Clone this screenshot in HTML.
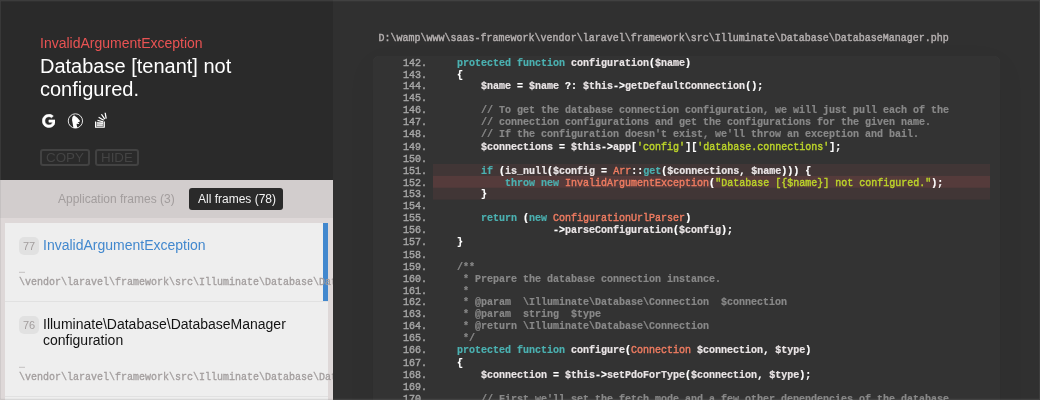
<!DOCTYPE html>
<html lang="en">
<head>
<meta charset="utf-8">
<title>Whoops! There was an error.</title>
<style>
html,body{margin:0;padding:0;}
body{width:1040px;height:400px;overflow:hidden;position:relative;background:#303030;font:12px "Liberation Sans",sans-serif;color:#131313;}
.mono{font-family:"Liberation Mono",monospace;}
#left{will-change:transform;position:absolute;left:0;top:0;width:333px;height:400px;background:#ded8d8;overflow:hidden;}
header{position:absolute;left:0;top:0;width:333px;height:180px;box-sizing:border-box;background:#2a2a2a;color:#fff;padding:35px 40px;overflow:hidden;}
.exc-title{margin:0;font-weight:normal;font-size:14px;line-height:16px;color:#e95353;}
.exc-message{margin:4px 0 0 0;font-size:20px;line-height:23px;color:#fff;}
.icons{position:absolute;left:0;top:0;}
.icons svg{position:absolute;display:block;}
.btn{position:absolute;top:149px;height:17px;box-sizing:border-box;font:13.3333px "Liberation Sans",sans-serif;line-height:15px;padding:1px 6px;color:#444;box-shadow:inset 0 0 0 2px #424242;border-radius:3px;}
.fdesc{position:absolute;left:0;top:180px;width:333px;height:38px;box-sizing:border-box;background:rgba(0,0,0,.05);padding:8px 15px;text-align:center;font-size:12px;line-height:14px;color:#a29d9d;}
.tab{display:inline-block;padding:4px 8px;margin:0 2px;border-radius:3px;color:#a29d9d;}
.tab.on{background:#2a2a2a;color:#f2f2f2;padding:4px 7px 4px 9px;margin-left:1px;}
.el{-webkit-text-stroke:0;}
#edge{position:absolute;left:0;top:0;width:1040px;height:400px;box-sizing:border-box;box-shadow:inset 0 0 0 1px rgba(128,128,128,.16),inset 0 2px 0 0 rgba(128,128,128,.07),inset 0 -2px 0 0 rgba(128,128,128,.05);pointer-events:none;z-index:9;}
.frames{position:absolute;left:5px;top:223px;width:323px;}
.frame{padding:14px;background:#eee;border-bottom:1px solid rgba(0,0,0,.05);position:relative;}
.frame.active{box-shadow:inset -5px 0 0 0 #4288ce;color:#4288ce;}
.fidx{float:left;font-size:11px;color:#a29d9d;background:rgba(0,0,0,.05);height:18px;width:18px;line-height:18px;border-radius:5px;padding:0 1px;text-align:center;}
.fmi{margin-left:24px;margin-bottom:10px;font-size:14px;line-height:16px;}
.ffile{position:relative;top:1px;transform:scaleY(1.08);transform-origin:0 0;-webkit-text-stroke:0.3px #a29d9d;font-family:"Liberation Mono",monospace;font-size:10px;line-height:11.1111px;color:#a29d9d;white-space:nowrap;height:22.2222px;margin-bottom:1.7778px;}
#right{will-change:transform;position:absolute;left:333px;top:0;width:707px;height:400px;background:#303030;overflow:hidden;}
.path{transform:scaleY(1.08);transform-origin:0 0;-webkit-text-stroke:0.4px #b5b0b0;position:absolute;left:45.6px;top:32.2px;font-family:"Liberation Mono",monospace;font-size:10px;line-height:11.1111px;color:#b5b0b0;white-space:pre;}
.code{position:absolute;left:40px;top:56px;width:627px;height:360px;background:#333;border-radius:6px;box-shadow:0 3px 0 rgba(0,0,0,.05),0 10px 30px rgba(0,0,0,.05),inset 0 0 1px 0 rgba(255,255,255,.07);font-family:"Liberation Mono",monospace;font-size:10px;line-height:11.1111px;color:#e9e4e5;white-space:pre;}
.cw{transform:scaleY(1.08);transform-origin:0 0;}
.ln{position:relative;margin-left:60px;margin-right:10px;height:11.1111px;}
.ln span{position:relative;top:0.8px;}
.ln.cur{background:rgba(255,100,100,.07);}
.ln.act{background:rgba(255,100,100,.17);}
.no{position:absolute !important;left:-30px;top:0.8px;color:#a5a5a5;font-weight:normal;-webkit-text-stroke:0.4px #a5a5a5;}
.k{color:#4bb1b1;font-weight:bold;-webkit-text-stroke:0.2px #4bb1b1;}
.p{color:#e9e4e5;font-weight:bold;-webkit-text-stroke:0.2px #e9e4e5;}
.u{color:#fff;font-weight:bold;-webkit-text-stroke:0.2px #fff;}
.c{color:#888;font-weight:bold;-webkit-text-stroke:0.2px #888;}
.t{color:#ef7c61;-webkit-text-stroke:0.4px #ef7c61;}
.s{color:#bcd42a;-webkit-text-stroke:0.4px #bcd42a;}
</style>
</head>
<body>
<div id="right">
<div class="path">D:\wamp\www\saas-framework\vendor\laravel\framework\src\Illuminate\Database\DatabaseManager.php</div>
<div class="code"><div class="cw"><div class="ln"><span class="no">142.</span><span class="p">    </span><span class="k">protected</span><span class="p"> </span><span class="k">function</span><span class="p"> configuration</span><span class="u">(</span><span class="p">$name</span><span class="u">)</span></div><div class="ln"><span class="no">143.</span><span class="p">    </span><span class="u">{</span></div><div class="ln"><span class="no">144.</span><span class="p">        $name </span><span class="u">=</span><span class="p"> $name </span><span class="u">?:</span><span class="p"> $this</span><span class="u">-&gt;</span><span class="p">getDefaultConnection</span><span class="u">();</span></div><div class="ln"><span class="no">145.</span></div><div class="ln"><span class="no">146.</span><span class="p">        </span><span class="c">// To get the database connection configuration, we will just pull each of the</span></div><div class="ln"><span class="no">147.</span><span class="p">        </span><span class="c">// connection configurations and get the configurations for the given name.</span></div><div class="ln"><span class="no">148.</span><span class="p">        </span><span class="c">// If the configuration doesn't exist, we'll throw an exception and bail.</span></div><div class="ln"><span class="no">149.</span><span class="p">        $connections </span><span class="u">=</span><span class="p"> $this</span><span class="u">-&gt;</span><span class="p">app</span><span class="u">[</span><span class="s">'config'</span><span class="u">][</span><span class="s">'database.connections'</span><span class="u">];</span></div><div class="ln"><span class="no">150.</span></div><div class="ln cur"><span class="no">151.</span><span class="p">        </span><span class="k">if</span><span class="p"> </span><span class="u">(</span><span class="p">is_null</span><span class="u">(</span><span class="p">$config </span><span class="u">=</span><span class="p"> </span><span class="t">Arr</span><span class="u">::</span><span class="k">get</span><span class="u">(</span><span class="p">$connections</span><span class="u">,</span><span class="p"> $name</span><span class="u">)))</span><span class="p"> </span><span class="u">{</span></div><div class="ln cur act"><span class="no">152.</span><span class="p">            </span><span class="k">throw</span><span class="p"> </span><span class="k">new</span><span class="p"> </span><span class="t">InvalidArgumentException</span><span class="u">(</span><span class="s">"Database [{$name}] not configured."</span><span class="u">);</span></div><div class="ln cur"><span class="no">153.</span><span class="p">        </span><span class="u">}</span></div><div class="ln"><span class="no">154.</span></div><div class="ln"><span class="no">155.</span><span class="p">        </span><span class="k">return</span><span class="p"> </span><span class="u">(</span><span class="k">new</span><span class="p"> </span><span class="t">ConfigurationUrlParser</span><span class="u">)</span></div><div class="ln"><span class="no">156.</span><span class="p">                    </span><span class="u">-&gt;</span><span class="p">parseConfiguration</span><span class="u">(</span><span class="p">$config</span><span class="u">);</span></div><div class="ln"><span class="no">157.</span><span class="p">    </span><span class="u">}</span></div><div class="ln"><span class="no">158.</span></div><div class="ln"><span class="no">159.</span><span class="p">    </span><span class="c">/**</span></div><div class="ln"><span class="no">160.</span><span class="c">     * Prepare the database connection instance.</span></div><div class="ln"><span class="no">161.</span><span class="c">     *</span></div><div class="ln"><span class="no">162.</span><span class="c">     * @param  \Illuminate\Database\Connection  $connection</span></div><div class="ln"><span class="no">163.</span><span class="c">     * @param  string  $type</span></div><div class="ln"><span class="no">164.</span><span class="c">     * @return \Illuminate\Database\Connection</span></div><div class="ln"><span class="no">165.</span><span class="c">     */</span></div><div class="ln"><span class="no">166.</span><span class="p">    </span><span class="k">protected</span><span class="p"> </span><span class="k">function</span><span class="p"> configure</span><span class="u">(</span><span class="t">Connection</span><span class="p"> $connection</span><span class="u">,</span><span class="p"> $type</span><span class="u">)</span></div><div class="ln"><span class="no">167.</span><span class="p">    </span><span class="u">{</span></div><div class="ln"><span class="no">168.</span><span class="p">        $connection </span><span class="u">=</span><span class="p"> $this</span><span class="u">-&gt;</span><span class="p">setPdoForType</span><span class="u">(</span><span class="p">$connection</span><span class="u">,</span><span class="p"> $type</span><span class="u">);</span></div><div class="ln"><span class="no">169.</span></div><div class="ln"><span class="no">170.</span><span class="p">        </span><span class="c">// First we'll set the fetch mode and a few other dependencies of the database</span></div></div></div>
</div>
<div id="left">
<header>
<h1 class="exc-title">InvalidArgumentException</h1>
<p class="exc-message">Database [tenant] not configured.</p>
<div class="icons">
<svg style="left:41.5px;top:113.6px" width="13.6" height="14.4" viewBox="-12 -4 512 544"><path stroke="#fff" stroke-width="22" fill="#fff" d="M488 261.8C488 403.3 391.1 504 248 504 110.8 504 0 393.2 0 256S110.8 8 248 8c66.8 0 123 24.500 166.300 64.900l-67.500 64.900C258.500 52.600 94.300 116.600 94.300 256c0 86.500 69.100 156.600 153.700 156.600 98.200 0 135-70.400 140.800-106.900H248v-85.300h236.100c2.300 12.700 3.900 24.900 3.900 41.400z"/></svg>
<svg style="left:67px;top:113px" width="17" height="16" viewBox="0 0 17 16"><circle cx="8.4" cy="7.95" r="7.15" fill="none" stroke="#e4e4e4" stroke-width="1"/><path fill="#fff" d="M7 2.300L10.300 4.800L12.900 7.700L12.500 9L10.600 9L12.200 10.400L11.800 11L9.800 10.800L9.600 11.600L10.300 14.800Q8.300 15.400 6.400 14.800L5.700 10.600Q4.500 7 5.400 4.100Z"/></svg>
<svg style="left:91.5px;top:111.2px" width="17.5" height="17.5" viewBox="-1163 1657.697 56.693 56.693"><rect x="-1150.500" y="1692.500" width="29.500" height="16.500" fill="#fff" opacity=".38"/><path fill="#fff" d="M-1126.04 1689.533l-16.577-9.778 2.088-3.540 16.578 9.778zM-1127.386 1694.635l-18.586-4.996 1.068-3.970 18.586 4.995zM-1127.824 1700.137l-19.165-1.767.378-4.093 19.165 1.767zM-1147.263 1701.293h19.247v4.110h-19.247z"/><path fill="#fff" d="M-1121.458 1710.947s0 .960-.032.960v.016h-30.796s-.960 0-.960-.016h-.032v-20.030h3.288v16.805h25.244v-16.804h3.288v20.030zM-1130.667 1667.040l10.844 15.903-3.396 2.316-10.843-15.903zM-1118.313 1663.044l3.290 18.963-4.050.703-3.290-18.963z"/></svg>
</div>
<div class="btn" style="left:40px">COPY</div>
<div class="btn" style="left:95px">HIDE</div>
</header>
<div class="fdesc"><span class="tab">Application frames (3)</span> <span class="tab on">All frames (78)</span></div>
<div class="frames">
<div class="frame active"><div class="fidx">77</div><div class="fmi">InvalidArgumentException</div><div class="ffile"><span class="el">…</span><br>\vendor\laravel\framework\src\Illuminate\Database\DatabaseManager.php:152</div></div>
<div class="frame"><div class="fidx">76</div><div class="fmi">Illuminate\Database\DatabaseManager configuration</div><div class="ffile"><span class="el">…</span><br>\vendor\laravel\framework\src\Illuminate\Database\DatabaseManager.php:115</div></div>
<div class="frame"><div class="fidx">75</div><div class="fmi">Illuminate\Database\DatabaseManager makeConnection</div><div class="ffile"><span class="el">…</span><br>\vendor\laravel\framework\src\Illuminate\Database\DatabaseManager.php:86</div></div>
</div>
</div>
<div id="edge"></div>
</body>
</html>
